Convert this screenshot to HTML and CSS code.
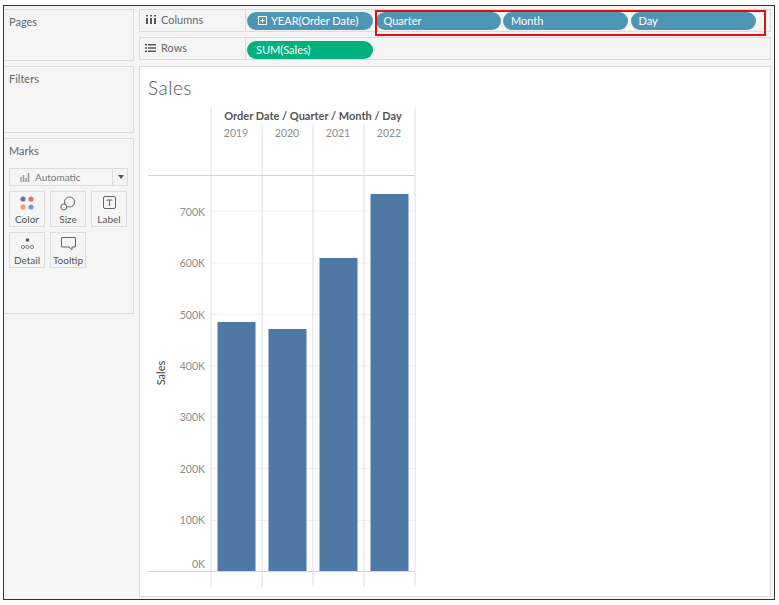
FILE: index.html
```html
<!DOCTYPE html>
<html lang="en">
<head>
    <meta charset="UTF-8">
    <meta name="viewport" content="width=device-width, initial-scale=1.0">
    <title>Sales</title>
    <link rel="stylesheet" href="styles.css">
</head>
<body>

    <div class="workspace">

        <!-- Left side cards -->
        <div class="sidebar">
            <div class="card pages-card"><div class="card-title">Pages</div></div>
            <div class="card filters-card"><div class="card-title">Filters</div></div>
            <div class="card marks-card">
                <div class="card-title">Marks</div>
                <div class="mark-select">
                    <div class="mark-type">
                        <svg width="10" height="9" viewBox="0 0 10 9"><path d="M1 4v5M3.5 2v7M6 5v4M8.5 0v9" stroke="#9a9a9a" stroke-width="1.5"/></svg>
                        Automatic
                    </div>
                    <div class="mark-arrow"></div>
                </div>
                <div class="mark-buttons">
                    <div class="mark-btn">
                        <svg width="16" height="14" viewBox="0 0 16 14"><circle cx="4" cy="3" r="2.6" fill="#7b6a9c"/><circle cx="12" cy="3" r="2.6" fill="#e0697a"/><circle cx="4" cy="11" r="2.6" fill="#f0a060"/><circle cx="12" cy="11" r="2.6" fill="#6f9bc8"/></svg>
                        <span>Color</span>
                    </div>
                    <div class="mark-btn">
                        <svg width="16" height="15" viewBox="0 0 16 15" fill="none" stroke="#666"><circle cx="9.5" cy="6" r="5"/><circle cx="3.8" cy="11" r="3" fill="#f5f5f5"/></svg>
                        <span>Size</span>
                    </div>
                    <div class="mark-btn">
                        <svg width="13" height="13" viewBox="0 0 13 13" fill="none" stroke="#666"><rect x="0.5" y="0.5" width="12" height="12" rx="1.5"/><path d="M4 4.5V4h5v.5M6.5 4v5M5.5 9h2"/></svg>
                        <span>Label</span>
                    </div>
                    <div class="mark-btn">
                        <svg width="13" height="14" viewBox="0 0 13 14" fill="none" stroke="#666" stroke-width="0.8"><circle cx="6.5" cy="3" r="1.8" fill="#555" stroke="none"/><circle cx="2" cy="10" r="1.6"/><circle cx="6.5" cy="10" r="1.6"/><circle cx="11" cy="10" r="1.6"/></svg>
                        <span>Detail</span>
                    </div>
                    <div class="mark-btn">
                        <svg width="15" height="14" viewBox="0 0 15 14" fill="none" stroke="#666"><path d="M.5.5h14V10H11v3L8 10H.5z"/></svg>
                        <span>Tooltip</span>
                    </div>
                </div>
            </div>
        </div>

        <div class="main">
            <!-- Shelves -->
            <div class="shelf columns-shelf">
                <div class="shelf-label">
                    <svg width="10" height="9" viewBox="0 0 10 9" fill="#555"><path d="M0 3h2v6H0zM4 3h2v6H4zM8 3h2v6H8zM0 0h2v1.5H0zM4 0h2v1.5H4zM8 0h2v1.5H8z"/></svg>
                    Columns
                </div>
                <div class="shelf-pills">
                    <div class="pill">
                        <svg width="9" height="9" viewBox="0 0 9 9" fill="none" stroke="#fff"><rect x="0.5" y="0.5" width="8" height="8"/><path d="M2.5 4.5h4M4.500 2.5v4"/></svg>
                        YEAR(Order Date)
                    </div>
                    <div class="pill plain">Quarter</div>
                    <div class="pill plain">Month</div>
                    <div class="pill plain">Day</div>
                </div>
                <div class="highlight"></div>
            </div>
            <div class="shelf rows-shelf">
                <div class="shelf-label">
                    <svg width="11" height="8" viewBox="0 0 11 8" fill="#555"><path d="M0 0h2v1.500H0zM0 3.250h2v1.500H0zM0 6.500h2V8H0zM3 0h8v1.500H3zM3 3.250h8v1.500H3zM3 6.500h8V8H3z"/></svg>
                    Rows
                </div>
                <div class="shelf-pills">
                    <div class="pill green">SUM(Sales)</div>
                </div>
            </div>

            <!-- The view -->
            <div class="view">
                <div class="view-title">Sales</div>
                <svg class="chart" width="300" height="490" viewBox="140 105 300 490">
                    <g class="grid">
                        <path d="M211 211H415M211 263H415M211 314.5H415M211 366H415M211 417H415M211 468.5H415M211 520.5H415"/>
                    </g>
                    <g class="bars">
                        <rect x="217.5" y="322" width="38" height="249"/>
                        <rect x="268.5" y="329" width="38" height="242"/>
                        <rect x="319.5" y="258" width="38" height="313"/>
                        <rect x="370.5" y="194" width="38" height="377"/>
                    </g>
                    <g class="dividers">
                        <path d="M211 107V587M415 107V587M262 124V587M313 124V587M364 124V587"/>
                    </g>
                    <path class="axis" d="M148 175.5H415M148 571.5H415"/>
                    <text class="header" x="313" y="120" text-anchor="middle">Order Date / Quarter / Month / Day</text>
                    <g class="years" text-anchor="middle">
                        <text x="236" y="137">2019</text>
                        <text x="287" y="137">2020</text>
                        <text x="338" y="137">2021</text>
                        <text x="389" y="137">2022</text>
                    </g>
                    <g class="ticks" text-anchor="end">
                        <text x="205" y="216">700K</text>
                        <text x="205" y="267">600K</text>
                        <text x="205" y="319">500K</text>
                        <text x="205" y="370">400K</text>
                        <text x="205" y="421">300K</text>
                        <text x="205" y="473">200K</text>
                        <text x="205" y="524">100K</text>
                        <text x="205" y="568">0K</text>
                    </g>
                    <text class="axis-title" x="0" y="0" text-anchor="middle" transform="translate(165 373) rotate(-90)">Sales</text>
                </svg>
            </div>
        </div>
    </div>

</body>
</html>
```

FILE: styles.css
```css
* {
    margin: 0;
    padding: 0;
    box-sizing: border-box;
}

body {
    font-family: Lato, "Open Sans", sans-serif;
    background-color: #fff;
    color: #666;
    height: 605px;
    overflow: hidden;
}

/* Outer frame of the screenshot */
.workspace {
    display: flex;
    gap: 5px;
    width: 772px;
    height: 595px;
    margin: 5px 0 0 3px;
    padding: 3px 3px 2px 0;
    border: 1px solid #333;
    background-color: #f5f5f5;
}

.sidebar {
    display: flex;
    flex-direction: column;
    gap: 5px;
    width: 130px;
    flex-shrink: 0;
}

.card {
    background-color: #f5f5f5;
    border: 1px solid #dcdcdc;
    border-left: 0;
    padding: 5px 5px;
}

.card-title {
    font-size: 11px;
    line-height: 14px;
    color: #666;
}

.pages-card { height: 52px; }
.filters-card { height: 67px; }
.marks-card { height: 176px; }

/* Marks card */
.mark-select {
    display: flex;
    height: 18px;
    margin: 10px 0 5px;
    border: 1px solid #dcdcdc;
    font-size: 10px;
    color: #777;
}

.mark-type {
    flex: 1;
    display: flex;
    align-items: center;
    gap: 5px;
    padding-left: 10px;
    border-right: 1px solid #dcdcdc;
}

.mark-arrow {
    width: 14px;
    position: relative;
}

.mark-arrow::after {
    content: "";
    position: absolute;
    left: 5px;
    top: 6px;
    border-left: 3px solid transparent;
    border-right: 3px solid transparent;
    border-top: 4px solid #555;
}

.mark-buttons {
    display: grid;
    grid-template-columns: 36px 36px 36px;
    grid-auto-rows: 36px;
    column-gap: 5px;
    row-gap: 5px;
}

.mark-btn {
    display: flex;
    flex-direction: column;
    align-items: center;
    justify-content: space-between;
    padding: 4px 0 1px;
    border: 1px solid #dcdcdc;
    font-size: 10px;
    color: #555;
}

/* Shelves and view */
.main {
    flex: 1;
    display: flex;
    flex-direction: column;
    gap: 5px;
    min-width: 0;
}

.shelf {
    display: flex;
    height: 23px;
    border: 1px solid #dcdcdc;
    position: relative;
}

.shelf-label {
    display: flex;
    align-items: center;
    gap: 5px;
    width: 106px;
    padding: 0 0 2px 6px;
    border-right: 1px solid #dcdcdc;
    font-size: 11px;
    color: #666;
}

.rows-shelf .shelf-label {
    padding-left: 5px;
}

.shelf-pills {
    display: flex;
    align-items: flex-start;
    gap: 2.5px;
    padding: 2px 0 0 1px;
}

.rows-shelf .shelf-pills {
    padding-top: 3px;
}

.pill {
    display: flex;
    align-items: center;
    gap: 4px;
    width: 126px;
    height: 18px;
    padding: 0 0 1px 11px;
    border-radius: 9px;
    background-color: #4f96b4;
    color: #fff;
    font-size: 11px;
}

.pill.plain {
    width: 125px;
    padding-left: 8px;
}

.pill.green {
    background-color: #00b180;
    padding-left: 9px;
}

.highlight {
    position: absolute;
    left: 235px;
    top: 0;
    width: 391px;
    height: 26px;
    border: 2px solid #e01010;
}

.view {
    flex: 1;
    margin-top: 1px;
    background-color: #fff;
    border: 1px solid #dcdcdc;
    padding: 10px 0 0 8px;
    min-height: 0;
}

.view-title {
    font-size: 19px;
    font-weight: 300;
    line-height: 22px;
    letter-spacing: 0.5px;
    color: #555;
}

.chart {
    display: block;
    margin: 6px 0 0 -8px;
}

.grid path {
    stroke: #f2f2f2;
    fill: none;
}

.bars rect {
    fill: #4e79a7;
}

.dividers path {
    stroke: #dedede;
    fill: none;
}

.axis {
    stroke: #d4d4d4;
    fill: none;
}

.chart text {
    font-family: Lato, "Open Sans", sans-serif;
    font-size: 10.5px;
}

.chart .header {
    font-size: 11px;
    font-weight: 700;
    fill: #555;
}

.years text,
.ticks text {
    fill: #8c8c8c;
}

.chart .axis-title {
    fill: #444;
    font-size: 11px;
}
```
